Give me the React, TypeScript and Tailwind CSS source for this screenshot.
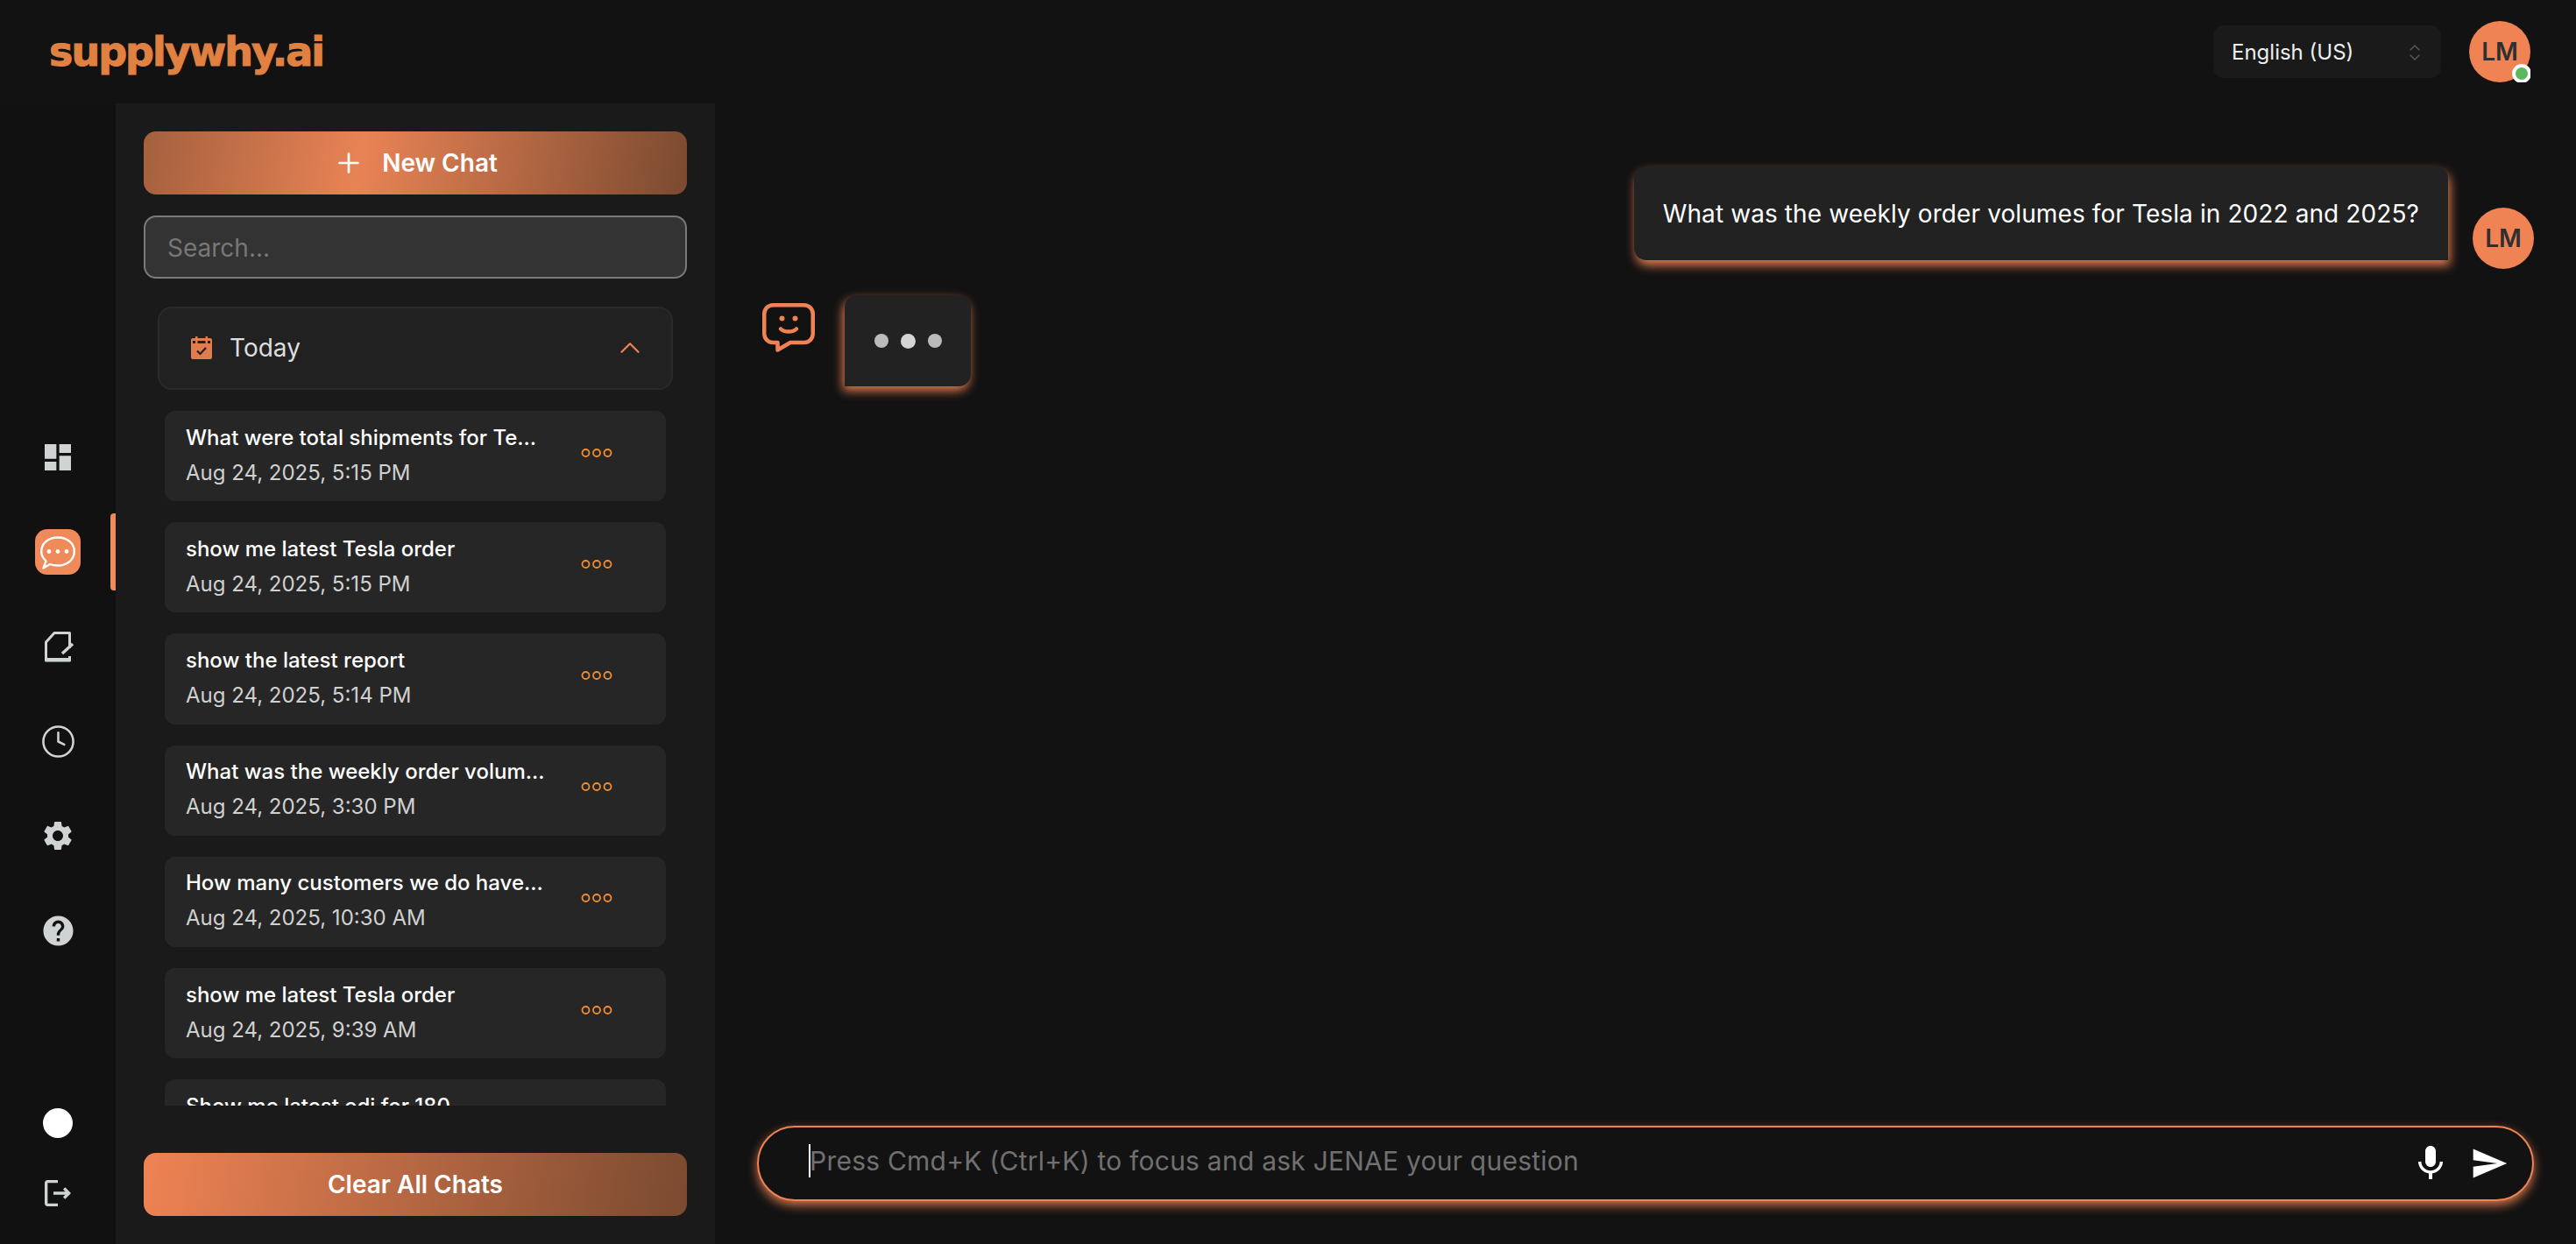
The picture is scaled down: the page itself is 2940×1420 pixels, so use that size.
import { Clock, Plus, ChevronUp, ChevronsUpDown } from "lucide-react";
import {
  MdDashboard,
  MdSettings,
  MdHelp,
  MdOutlineLogout,
  MdMic,
  MdSend,
} from "react-icons/md";

const chats = [
  { title: "What were total shipments for Te...", date: "Aug 24, 2025, 5:15 PM" },
  { title: "show me latest Tesla order", date: "Aug 24, 2025, 5:15 PM" },
  { title: "show the latest report", date: "Aug 24, 2025, 5:14 PM" },
  { title: "What was the weekly order volum...", date: "Aug 24, 2025, 3:30 PM" },
  { title: "How many customers we do have...", date: "Aug 24, 2025, 10:30 AM" },
  { title: "show me latest Tesla order", date: "Aug 24, 2025, 9:39 AM" },
  { title: "Show me latest edi for 180", date: "" },
];

function ChatBubbleIcon() {
  return (
    <svg width="52" height="52" viewBox="0 0 52 52" fill="none">
      <path
        d="M12.5 36.5C9 33 7.2 29.5 7.2 25.5C7.2 16 15.5 9.5 26 9.5S44.8 16 44.8 25.5S36.5 41.5 26 41.5C22.5 41.5 19.5 41 17 40L9.5 44.5Z"
        stroke="#fff"
        strokeWidth="2.4"
        strokeLinejoin="round"
      />
      <circle cx="16" cy="25.5" r="2.4" fill="#fff" />
      <circle cx="26" cy="25.5" r="2.4" fill="#fff" />
      <circle cx="36" cy="25.5" r="2.4" fill="#fff" />
    </svg>
  );
}

function ReportIcon() {
  return (
    <svg width="40" height="40" viewBox="0 0 40 40" fill="none" stroke="#d0d3d3">
      <path
        d="M33.5 22V4.5H16L6.5 15V36H33.5V31"
        strokeWidth="3"
        strokeLinejoin="round"
      />
      <path d="M6.5 35H33.5" strokeWidth="4" />
      <path d="M25 28L37 17" strokeWidth="3.4" />
    </svg>
  );
}

function CalendarIcon() {
  return (
    <svg width="24" height="26" viewBox="0 0 24 26">
      <rect x="0" y="2" width="24" height="24" rx="2" fill="#e07c4e" />
      <rect x="5" y="0" width="2.5" height="5" fill="#e07c4e" />
      <rect x="16.5" y="0" width="2.5" height="5" fill="#e07c4e" />
      <rect x="2" y="5" width="20" height="3" fill="#212121" />
      <rect x="5" y="4" width="2.5" height="4" fill="#e07c4e" />
      <rect x="16.5" y="4" width="2.5" height="4" fill="#e07c4e" />
      <path d="M7 16.5L10.5 20L17 13" fill="none" stroke="#212121" strokeWidth="2.2" />
    </svg>
  );
}

function RingDots() {
  return (
    <svg width="36" height="12" viewBox="0 0 36 12" fill="none" stroke="#f08c34" strokeWidth="1.8">
      <circle cx="5.5" cy="6" r="4" />
      <circle cx="18" cy="6" r="4" />
      <circle cx="30.5" cy="6" r="4" />
    </svg>
  );
}

function SmileBubbleIcon() {
  return (
    <svg width="60" height="58" viewBox="0 0 60 58" fill="none">
      <path
        d="M12.25 2.25H47.75a10 10 0 0 1 10 10V35a10 10 0 0 1-10 10H32L17.5 53.5V45H12.25a10 10 0 0 1-10-10V12.25a10 10 0 0 1 10-10Z"
        stroke="#ef8354"
        strokeWidth="4.5"
        strokeLinejoin="round"
      />
      <circle cx="22.5" cy="17.5" r="3" fill="#ef8354" />
      <circle cx="37.5" cy="17.5" r="3" fill="#ef8354" />
      <path
        d="M21 29.5C25 33.5 35 33.5 39 29.5"
        stroke="#ef8354"
        strokeWidth="4.5"
        strokeLinecap="round"
      />
    </svg>
  );
}

function RailItem({ children, active }: { children: React.ReactNode; active?: boolean }) {
  return (
    <div className="relative flex h-[108px] w-full items-center justify-center">
      {children}
      {active && (
        <span className="absolute right-0 top-[10px] h-[88px] w-[6px] rounded-l-[4px] bg-[#ef8a5a]" />
      )}
    </div>
  );
}

function Avatar() {
  return (
    <div className="flex h-[70px] w-[70px] items-center justify-center rounded-full bg-[#ef8354] text-[28px] font-semibold text-[#2f2f2f]">
      LM
    </div>
  );
}

export default function App() {
  return (
    <div className="flex h-screen w-screen flex-col overflow-hidden bg-[#121212] font-['Inter',sans-serif] text-white">
      <header className="flex h-[118px] shrink-0 items-start justify-between pr-[52px]">
        <div className="ml-[56px] mt-[29px] font-['DejaVu_Sans',sans-serif] text-[46px] font-bold leading-[60px] tracking-[-2px] text-[#e08142] [-webkit-text-stroke:1px_#e08142]">
          supplywhy.ai
        </div>
        <div className="mt-[24px] flex items-start gap-[32px]">
          <div className="mt-[5px] flex h-[60px] w-[260px] items-center justify-between rounded-[12px] bg-[#1a1a1a] pl-[21px] pr-[18px] pt-[2px] text-[24px] text-[#eeeeee]">
            English (US)
            <ChevronsUpDown size={24} strokeWidth={1.5} className="text-[#555555]" />
          </div>
          <div className="relative h-[70px] w-[70px] overflow-hidden">
            <Avatar />
            <span className="absolute left-[49px] top-[49px] h-[22px] w-[22px] rounded-full border-[4px] border-white bg-[#5cb85c]" />
          </div>
        </div>
      </header>

      <div className="flex min-h-0 flex-1">
        <nav className="flex w-[132px] shrink-0 flex-col items-center bg-[#111111] pb-[18px] pt-[350px] text-[#d0d3d3]">
          <RailItem>
            <MdDashboard size={40} />
          </RailItem>
          <RailItem active>
            <div className="flex h-[52px] w-[52px] items-center justify-center rounded-[14px] bg-[#ef8a5a]">
              <ChatBubbleIcon />
            </div>
          </RailItem>
          <RailItem>
            <ReportIcon />
          </RailItem>
          <RailItem>
            <Clock size={41} strokeWidth={1.5} />
          </RailItem>
          <RailItem>
            <MdSettings size={40} />
          </RailItem>
          <RailItem>
            <MdHelp size={41} />
          </RailItem>
          <div className="mt-auto flex h-[80px] items-center">
            <span className="block h-[34px] w-[34px] rounded-full bg-white" />
          </div>
          <div className="flex h-[80px] items-center">
            <MdOutlineLogout size={40} />
          </div>
        </nav>

        <aside className="flex w-[684px] shrink-0 flex-col bg-[#1a1a1a] px-[32px] py-[32px]">
          <button className="flex h-[72px] shrink-0 items-center justify-center gap-[20px] rounded-[14px] bg-[linear-gradient(100deg,#a4603e_0%,#e98355_40%,#7a4a30_100%)] text-[28px] font-semibold text-white">
            <Plus size={36} strokeWidth={1.8} />
            New Chat
          </button>
          <div className="mt-[24px] flex h-[72px] shrink-0 items-center rounded-[14px] border-2 border-[#7a7a7a] bg-[#333333] pl-[25px] pt-[2px] text-[28px] text-[#777777]">
            Search...
          </div>

          <div className="mx-[16px] mt-[32px] flex h-[95px] shrink-0 items-center justify-between rounded-[16px] border-2 border-[#2a2a2a] bg-[#212121] pb-[2px] pl-[36px] pr-[28px]">
            <div className="flex items-center gap-[20px] text-[28px] text-[#dddddd]">
              <CalendarIcon />
              Today
            </div>
            <ChevronUp size={38} strokeWidth={1.4} className="text-[#ef8354]" />
          </div>

          <div className="mx-[24px] mb-[54px] mt-[24px] flex min-h-0 flex-1 flex-col gap-[24px] overflow-hidden">
            {chats.map((chat, i) => (
              <div
                key={i}
                className="flex h-[103.2px] shrink-0 items-center justify-between rounded-[12px] bg-[#262626] pl-[24px] pr-[61px]"
              >
                <div className="mb-[2px] whitespace-nowrap text-[24px] leading-[40px]">
                  <div className="font-medium text-white">{chat.title}</div>
                  <div className="min-h-[40px] text-[#d0d0d0]">{chat.date}</div>
                </div>
                <div className="mb-[8px]">
                  <RingDots />
                </div>
              </div>
            ))}
          </div>

          <button className="flex h-[72px] shrink-0 items-center justify-center rounded-[14px] bg-[linear-gradient(100deg,#ef8354_0%,#7a4a30_100%)] text-[28px] font-semibold text-white">
            Clear All Chats
          </button>
        </aside>

        <main className="flex min-w-0 flex-1 flex-col px-[48px] pb-[49px] pt-[72px]">
          <div className="flex min-h-0 flex-1 flex-col gap-[30px]">
            <div className="flex items-start justify-end gap-[28px]">
              <div className="flex h-[107px] items-center rounded-[14px] rounded-br-none bg-[#222222] px-[33px] text-[28px] tracking-[0.1px] text-white shadow-[2px_6px_12px_rgba(239,131,84,0.95)]">
                What was the weekly order volumes for Tesla in 2022 and 2025?
              </div>
              <div className="mt-[47px]">
                <Avatar />
              </div>
            </div>
            <div className="ml-[6px] flex items-start gap-[34px]">
              <div className="mt-[9px]">
                <SmileBubbleIcon />
              </div>
              <div className="flex h-[104px] w-[144px] items-center justify-center gap-[14px] rounded-[14px] rounded-bl-none bg-[#222222] shadow-[-2px_5px_12px_rgba(239,131,84,0.95)]">
                <span className="h-[16px] w-[16px] rounded-full bg-[#bbbbbb]" />
                <span className="h-[17px] w-[17px] rounded-full bg-[#d4d4d4]" />
                <span className="h-[16px] w-[16px] rounded-full bg-[#bbbbbb]" />
              </div>
            </div>
          </div>

          <div className="flex h-[86px] shrink-0 items-center rounded-full border-2 border-[#ef8354] bg-[#121212] pl-[57px] pr-[27px] shadow-[0_5px_12px_rgba(239,131,84,0.85)]">
            <span className="mb-[6px] mr-[-1px] h-[38px] w-[2px] bg-white" />
            <span className="flex-1 whitespace-nowrap pb-[5px] text-[30px] tracking-[0.23px] text-[#707070]">
              Press Cmd+K (Ctrl+K) to focus and ask JENAE your question
            </span>
            <div className="flex items-center gap-[21px] text-white">
              <MdMic size={48} />
              <MdSend size={44} />
            </div>
          </div>
        </main>
      </div>
    </div>
  );
}
